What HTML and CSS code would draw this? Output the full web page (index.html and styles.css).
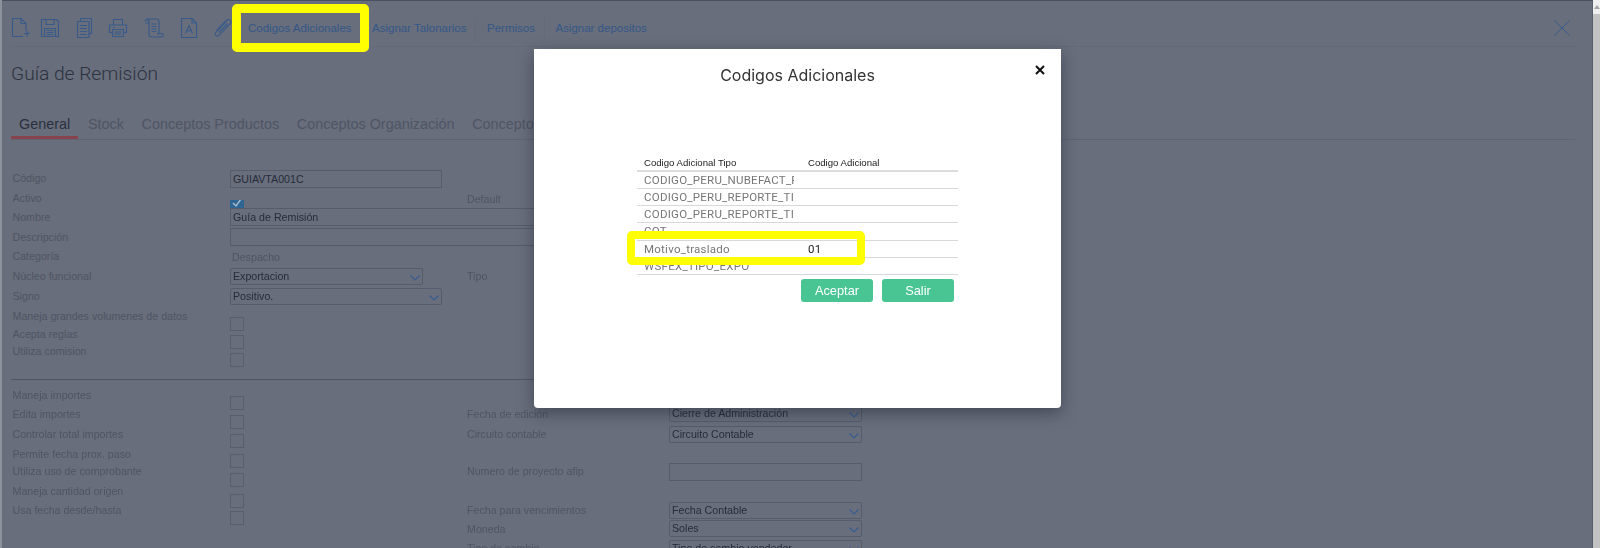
FILE: index.html
```html
<!DOCTYPE html>
<html lang="es">
<head>
<meta charset="utf-8">
<title>Guía de Remisión</title>
<link rel="stylesheet" href="styles.css">
</head>
<body>
<div class="app">
  <div class="edge"></div>
  <main class="main">
    <header class="toolbar">
      <svg class="tool mr9" viewBox="0 0 20 20"><path d="M1.500 18.500V.5H10l5 5v7M10 .5v5h5M1.500 18.500H12M13 15.500h6M16 12.500v6"/></svg>
      <svg class="tool mr15" viewBox="0 0 20 20"><path d="M1.500 1.500h15l2 2v15h-17zM6 1.500v5h8v-5M4.500 18.500v-8h11v8M6.500 12.500h7M6.500 14.500h7M6.500 16.500h7"/></svg>
      <svg class="tool mr13" viewBox="0 0 20 20"><path d="M5.500 3V.5h11v15H14M2.500 3.500h11.500v16H2.500zM5 7.500h7M5 10.500h7M5 13.500h7M5 16.500h7"/></svg>
      <svg class="tool mr16" viewBox="0 0 20 20"><path d="M5.500 7V1.500h9V7M4 14.500H1.500V7h17v7.500H16M4.500 11.500h11v7h-11zM6.500 14h7M6.500 16h7M5 9.500h2"/></svg>
      <svg class="tool mr15" viewBox="0 0 20 20"><path d="M1 3.500C1 1 5 1 5 3.500V5H1.500M3 1h10c2 0 2 1.500 2 3v12M5 3.500v13c0 1.500 1 2.500 2.500 2.500H18c1.500 0 1.500-3.500 0-3.500h-4v1.500M7.500 6h5M7.500 8.500h5M7.500 11h5M7.500 13.500h5"/></svg>
      <svg class="tool mr14" viewBox="0 0 20 20"><path d="M2.500 .5H13l4.500 4.500v14.500h-15zM13 .5V5h4.500M6.500 15.500L10 7.500l3.500 8M7.800 12.800h4.400"/></svg>
      <svg class="tool mr15" viewBox="0 0 20 20"><path d="M13 3.500L3 14c-2.200 2.500.8 5.500 3.200 3.200L17 6c2.500-3-.8-6-3.700-3.500L3.500 12.500M6 14.500l8.500-9"/></svg>
      <nav class="links">
        <a class="link">Codigos Adicionales</a>
        <a class="link link-sep">Asignar Talonarios</a>
        <a class="link link-sep">Permisos</a>
        <a class="link">Asignar depositos</a>
      </nav>
      <svg class="close-page" viewBox="0 0 16 16"><path d="M.5 .5l15 15M15.500 .5l-15 15"/></svg>
    </header>

    <h1 class="title">Guía de Remisión</h1>

    <div class="tabs">
      <span class="tab tab-active">General</span>
      <span class="tab">Stock</span>
      <span class="tab">Conceptos Productos</span>
      <span class="tab">Conceptos Organización</span>
      <span class="tab">Conceptos Adicionales</span>
    </div>

    <section class="form form-a">
      <div class="col col-labels">
        <span class="lbl h20">Código</span>
        <span class="lbl h19">Activo</span>
        <span class="lbl h20">Nombre</span>
        <span class="lbl h19">Descripción</span>
        <span class="lbl h20">Categoría</span>
        <span class="lbl h20">Núcleo funcional</span>
        <span class="lbl h20">Signo</span>
        <span class="lbl h18">Maneja grandes volumenes de datos</span>
        <span class="lbl h17">Acepta reglas</span>
        <span class="lbl h14">Utiliza comision</span>
      </div>
      <div class="col col-controls">
        <div class="input w212">GUIAVTA001C</div>
        <div class="check-on"><svg viewBox="0 0 14 14"><path d="M3 7l3 3 5-7"/></svg></div>
        <div class="input input-wide">Guía de Remisión</div>
        <div class="input input-wide mt2"></div>
        <div class="plain">Despacho</div>
        <div class="select w193 mt4">Exportacion<svg class="chev" viewBox="0 0 10 6"><path d="M.5 .5L5 5 9.500 .5"/></svg></div>
        <div class="select w212 mt3">Positivo.<svg class="chev" viewBox="0 0 10 6"><path d="M.5 .5L5 5 9.500 .5"/></svg></div>
        <div class="check mt12"></div>
        <div class="check mt4"></div>
        <div class="check mt4"></div>
      </div>
      <div class="col col-labels2">
        <span class="lbl mt22">Default</span>
        <span class="lbl mt63">Tipo</span>
      </div>
    </section>

    <hr class="rule">

    <section class="form form-b">
      <div class="col col-labels">
        <span class="lbl h19">Maneja importes</span>
        <span class="lbl h20">Edita importes</span>
        <span class="lbl h20">Controlar total importes</span>
        <span class="lbl h17">Permite fecha prox. paso</span>
        <span class="lbl h20">Utiliza uso de comprobante</span>
        <span class="lbl h19">Maneja cantidad origen</span>
        <span class="lbl h14">Usa fecha desde/hasta</span>
      </div>
      <div class="col col-controls">
        <div class="check mt16"></div>
        <div class="check mt5"></div>
        <div class="check mt5"></div>
        <div class="check mt6"></div>
        <div class="check mt5"></div>
        <div class="check mt7"></div>
        <div class="check mt3"></div>
      </div>
      <div class="col col-labels2">
        <span class="lbl mt27">Fecha de edición</span>
        <span class="lbl mt6">Circuito contable</span>
        <span class="lbl mt23">Numero de proyecto afip</span>
        <span class="lbl mt25">Fecha para vencimientos</span>
        <span class="lbl mt5">Moneda</span>
        <span class="lbl mt5">Tipo de cambio</span>
      </div>
      <div class="col">
        <div class="select w193 mt25">Cierre de Administración<svg class="chev" viewBox="0 0 10 6"><path d="M.5 .5L5 5 9.500 .5"/></svg></div>
        <div class="select w193 mt4">Circuito Contable<svg class="chev" viewBox="0 0 10 6"><path d="M.5 .5L5 5 9.500 .5"/></svg></div>
        <div class="input w193 mt20"></div>
        <div class="select w193 mt21">Fecha Contable<svg class="chev" viewBox="0 0 10 6"><path d="M.5 .5L5 5 9.500 .5"/></svg></div>
        <div class="select w193 mt1">Soles<svg class="chev" viewBox="0 0 10 6"><path d="M.5 .5L5 5 9.500 .5"/></svg></div>
        <div class="select w193 mt3">Tipo de cambio vendedor<svg class="chev" viewBox="0 0 10 6"><path d="M.5 .5L5 5 9.500 .5"/></svg></div>
      </div>
    </section>
  </main>
  <div class="scrollbar"><span class="scroll-up"></span><span class="scroll-thumb"></span></div>

  <div class="mark mark-toolbar"></div>

  <div class="modal">
    <h2 class="modal-title">Codigos Adicionales</h2>
    <svg class="modal-close" viewBox="0 0 10 10"><path d="M1 1l8 8M9 1l-8 8"/></svg>
    <div class="table">
      <div class="thead"><span class="c1">Codigo Adicional Tipo</span><span class="c2">Codigo Adicional</span></div>
      <div class="tr"><span class="c1">CODIGO_PERU_NUBEFACT_FORMATO</span><span class="c2"></span></div>
      <div class="tr"><span class="c1">CODIGO_PERU_REPORTE_TIPO</span><span class="c2"></span></div>
      <div class="tr"><span class="c1">CODIGO_PERU_REPORTE_TIPO</span><span class="c2"></span></div>
      <div class="tr"><span class="c1">COT</span><span class="c2"></span></div>
      <div class="tr"><span class="c1">Motivo_traslado</span><span class="c2">01</span></div>
      <div class="tr"><span class="c1">WSFEX_TIPO_EXPO</span><span class="c2"></span></div>
    </div>
    <div class="actions">
      <button class="btn">Aceptar</button>
      <button class="btn">Salir</button>
    </div>
    <div class="mark mark-row"></div>
  </div>
</div>
</body>
</html>
```
FILE: styles.css
```css
* { box-sizing: border-box; }
html, body { margin: 0; height: 100%; overflow: hidden; }
body { font-family: "Liberation Sans", Arial, sans-serif; background: #686e7b; }

.app { position: relative; display: flex; width: 1600px; height: 548px; overflow: hidden; }
.edge { width: 2px; background: #8d929c; flex: none; }
.main { flex: 1; min-width: 0; padding: 0 17px 0 9px; border-top: 1px solid #4a5062; border-right: 1px solid #575d6c; background: #686e7b; filter: blur(.4px); }

/* toolbar */
.toolbar { display: flex; align-items: center; height: 46px; padding-top: 9px; border-bottom: 1px solid #626b78; }
.tool { width: 20px; height: 20px; flex: none; fill: none; stroke: #375a8b; stroke-width: 1.1; }
.mr9 { margin-right: 9px; }
.mr13 { margin-right: 13px; }
.mr14 { margin-right: 14px; }
.mr15 { margin-right: 15px; }
.mr16 { margin-right: 16px; }
.links { display: flex; align-items: center; }
.link { font-size: 11.500px; line-height: 24px; color: #345788; margin-right: 20.500px; white-space: nowrap; }
.link-sep { position: relative; }
.link-sep::after { content: ""; position: absolute; right: -10px; top: 2px; width: 1px; height: 24px; background: #626b78; }
.close-page { width: 16px; height: 16px; margin-left: auto; margin-right: 5px; fill: none; stroke: #375a8b; stroke-width: 1; }

/* heading and tabs */
.title { margin: 16px 0 0; font: 300 19.200px/22px Roboto, sans-serif; color: #2c3240; }
.tabs { display: flex; gap: 1.700px; height: 25px; margin-top: 30px; border-bottom: 1px solid #5e6471; }
.tab { height: 24px; padding: 0 8px; font-size: 14.400px; line-height: 18px; color: #4f5565; white-space: nowrap; }
.tab-active { color: #2a303e; border-bottom: 3px solid #87444f; }

/* form */
.form { display: flex; font-size: 10.670px; }
.form-a { padding-top: 30px; height: 239px; }
.form-b { height: 170px; }
.col { display: flex; flex-direction: column; flex: none; }
.col > * { flex: none; }
.col-labels { width: 219px; padding: 1px 0 0 1.500px; }
.form-b .col-labels { padding-top: 8px; }
.col-controls { width: 237px; }
.col-labels2 { width: 202px; }
.lbl { display: block; line-height: 14px; color: #4f5564; white-space: nowrap; }
.h14 { height: 14px; } .h17 { height: 17px; } .h18 { height: 18px; } .h19 { height: 19px; } .h20 { height: 20px; }

.input, .select { border: 1px solid #565c6b; padding-left: 2px; color: #262c3a; white-space: nowrap; }
.input { height: 18px; line-height: 16px; }
.select { position: relative; height: 17px; line-height: 15px; border-radius: 2px; }
.input-wide { width: 410px; }
.w193 { width: 193px; } .w212 { width: 212px; }
.chev { position: absolute; right: 2px; top: 6px; width: 10px; height: 6px; fill: none; stroke: #395c92; stroke-width: 1.2; }
.plain { height: 14px; margin-top: 4px; padding-left: 2px; line-height: 14px; color: #4f5564; }
.check { width: 14px; height: 14px; border: 1px solid #585e6c; }
.check-on { width: 14px; height: 8px; margin-top: 12px; overflow: hidden; background: #2f6593; }
.check-on svg { display: block; width: 14px; height: 14px; margin-top: -4px; fill: none; stroke: #a9bccd; stroke-width: 1.4; }

.rule { width: 700px; height: 1px; margin: 0; border: 0; background: #4f5564; }

.mt1 { margin-top: 1px; } .mt2 { margin-top: 2px; } .mt3 { margin-top: 3px; } .mt4 { margin-top: 4px; }
.mt5 { margin-top: 5px; } .mt6 { margin-top: 6px; } .mt7 { margin-top: 7px; } .mt12 { margin-top: 12px; }
.mt16 { margin-top: 16px; } .mt20 { margin-top: 20px; } .mt21 { margin-top: 21px; } .mt22 { margin-top: 22px; } .mt23 { margin-top: 23px; }
.mt25 { margin-top: 25px; } .mt27 { margin-top: 27px; } .mt63 { margin-top: 63px; }

/* scrollbar */
.scrollbar { display: flex; flex-direction: column; align-items: center; width: 7px; flex: none; background: #efefef; }
.scroll-up { width: 0; height: 0; margin-top: 5px; border: 3px solid transparent; border-top: 0; border-bottom: 4px solid #a3a3a3; }
.scroll-thumb { flex: 1; width: 100%; margin-top: 5px; background: #c3c3c3; }

/* annotations */
.mark { position: absolute; background: transparent; border-style: solid; border-color: #ffff00; }
.mark-toolbar { left: 232px; top: 4px; width: 137px; height: 48px; border-width: 9px; border-radius: 5px; }
.mark-row { left: 93px; top: 182px; width: 238px; height: 34px; border-width: 8px; border-radius: 5px; }

/* modal */
.modal { position: absolute; left: 534px; top: 49px; width: 527px; height: 359px; background: #fff; border-radius: 0 0 4px 4px; box-shadow: 0 5px 15px rgba(30, 36, 50, .5); }
.modal-title { margin: 17px 0 0; text-align: center; font: 400 16px/18px Inter, "Open Sans", sans-serif; color: #333; }
.modal-close { position: absolute; left: 501px; top: 16px; width: 10px; height: 10px; fill: none; stroke: #111; stroke-width: 2; }
.table { width: 321px; margin: 71px 0 0 103px; }
.thead { display: flex; height: 16.500px; border-bottom: 2px solid #dcdcdc; font-size: 9.600px; line-height: 15px; color: #222; }
.tr { display: flex; height: 17.330px; border-bottom: 1px solid #d8d8d8; font: 11.500px/17px Roboto, sans-serif; letter-spacing: .25px; color: #777; }
.c1 { width: 157px; padding-left: 7px; overflow: hidden; white-space: nowrap; flex: none; }
.c2 { flex: 1; padding-left: 14px; color: #222; white-space: nowrap; }
.actions { display: flex; justify-content: flex-end; gap: 9px; margin-top: 4px; width: 317px; margin-left: 103px; }
.btn { width: 72px; height: 23px; padding: 0; border: 0; border-radius: 3px; background: #48c593; color: #fff; font: 12.800px/23px "Liberation Sans", Arial, sans-serif; }
```
